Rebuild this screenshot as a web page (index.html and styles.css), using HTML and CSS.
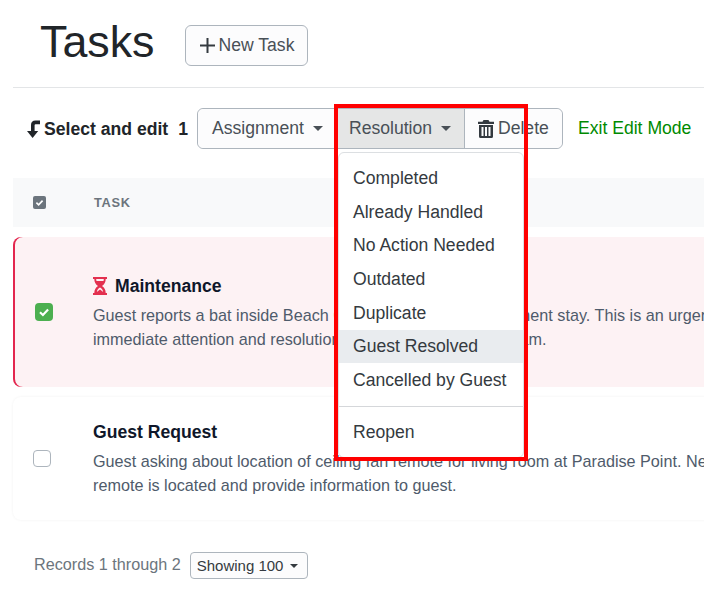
FILE: index.html
```html
<!DOCTYPE html>
<html lang="en">
<head>
<meta charset="utf-8">
<title>Tasks</title>
<link rel="stylesheet" href="styles.css">
</head>
<body>
<main class="page">
  <header class="page-header">
    <h1 class="title">Tasks</h1>
    <button class="btn btn-new">
      <svg class="icon-plus" viewBox="0 0 15 15" width="15" height="15"><path d="M6.5 0h2v6.5H15v2H8.5V15h-2V8.5H0v-2h6.5z"/></svg>
      New Task
    </button>
  </header>

  <section class="toolbar">
    <svg class="icon-level" viewBox="0 0 13 18" width="13" height="18"><path d="M13 .5H8.5Q4 .5 4 5v6H0l5.6 7 5.6-7H7.6V5.2q0-1 1-1H13z"/></svg>
    <strong class="select-label">Select and edit</strong>
    <strong class="select-count">1</strong>
    <div class="btn-group">
      <button class="group-btn group-assign">Assignment<span class="caret"></span></button>
      <div class="group-item">
        <button class="group-btn group-res">Resolution<span class="caret"></span></button>
        <div class="menu">
          <a class="menu-item">Completed</a>
          <a class="menu-item">Already Handled</a>
          <a class="menu-item">No Action Needed</a>
          <a class="menu-item">Outdated</a>
          <a class="menu-item">Duplicate</a>
          <a class="menu-item menu-item-hover">Guest Resolved</a>
          <a class="menu-item">Cancelled by Guest</a>
          <div class="menu-divider"></div>
          <a class="menu-item">Reopen</a>
        </div>
        <div class="highlight"></div>
      </div>
      <button class="group-btn group-del">
        <svg class="icon-trash" viewBox="0 0 16 18" width="16" height="18"><path fill-rule="evenodd" d="M5.5 0h5l1 1.8H16V4H0V1.8h4.500zM1 5h14v11.500Q15 18 13.500 18h-11Q1 18 1 16.500zM3.500 7v9h2V7zM7 7v9h2V7zM10.500 7v9h2V7z"/></svg>
        Delete
      </button>
    </div>
    <a class="exit-link">Exit Edit Mode</a>
  </section>

  <div class="table-head">
    <span class="head-check">
      <svg viewBox="0 0 13 13" width="13" height="13"><rect width="13" height="13" rx="2" fill="#6c757d"/><path d="M3.4 6.7l2.2 2.1 4-4.2" fill="none" stroke="#fff" stroke-width="1.7"/></svg>
    </span>
    <span class="head-label">TASK</span>
  </div>

  <article class="row row-selected">
    <div class="row-check">
      <span class="check check-on">
        <svg viewBox="0 0 18 18" width="18" height="18"><path d="M5 9.3l2.900 2.700 5.200-5.400" fill="none" stroke="#fff" stroke-width="2.200"/></svg>
      </span>
    </div>
    <div class="row-body">
      <h2 class="row-title">
        <svg class="icon-hourglass" viewBox="0 0 14 18" width="14" height="18"><path fill-rule="evenodd" d="M0 0h14v2h-1.300c0 3-1.300 5.500-3.700 7 2.400 1.500 3.700 4 3.700 7H14v2H0v-2h1.300c0-3 1.300-5.500 3.700-7C2.600 7.500 1.300 5 1.300 2H0zM3.200 2c0 .8.100 1.400.3 2h7c.2-.6.300-1.200.3-2zM7 10.500c-1.700.9-2.800 2.500-3.200 4.500L7 12.500l3.200 2.500c-.4-2-1.500-3.600-3.200-4.500z"/></svg>
        Maintenance
      </h2>
      <p class="row-text">Guest reports a bat inside Beach Cottage during their apartment stay. This is an urgent issue that requires</p>
      <p class="row-text">immediate attention and resolution from the maintenance team.</p>
    </div>
  </article>

  <article class="row row-plain">
    <div class="row-check">
      <span class="check check-off"></span>
    </div>
    <div class="row-body">
      <h2 class="row-title">Guest Request</h2>
      <p class="row-text">Guest asking about location of ceiling fan remote for living room at Paradise Point. Need to confirm where</p>
      <p class="row-text">remote is located and provide information to guest.</p>
    </div>
  </article>

  <footer class="pager">
    <span class="pager-text">Records 1 through 2</span>
    <button class="pager-select">Showing 100<span class="caret caret-small"></span></button>
  </footer>
</main>
</body>
</html>
```

FILE: styles.css
```css
html, body {
  margin: 0;
  padding: 0;
  height: 591px;
  overflow: hidden;
  background: #fff;
}

body {
  font-family: "Liberation Sans", Arial, sans-serif;
  font-size: 16px;
  color: #212529;
}

.page {
  width: 1100px;
  margin-left: 13px;
}

.page-header {
  display: flex;
  align-items: center;
  gap: 30px;
  height: 88px;
  padding-left: 27px;
  padding-bottom: 4px;
  box-sizing: border-box;
  border-bottom: 1px solid #e3e5e7;
  margin-bottom: 20px;
}

.title {
  margin: 0;
  font-size: 44.8px;
  font-weight: 400;
  line-height: 1;
  color: #212529;
}

.btn {
  font: inherit;
}

.btn-new {
  display: flex;
  align-items: center;
  gap: 4px;
  height: 41px;
  width: 123px;
  margin-top: 8px;
  padding: 0 0 0 14px;
  font-size: 17.6px;
  background: #fcfcfd;
  color: #495057;
  border: 1px solid #adb5bd;
  border-radius: 6px;
}

.icon-plus {
  fill: #343a40;
  flex: none;
}

.toolbar {
  display: flex;
  align-items: center;
  height: 41px;
  padding-left: 14px;
  margin-bottom: 29px;
}

.icon-level {
  fill: #212529;
  flex: none;
  margin-right: 4px;
}

.select-label {
  font-size: 17.6px;
  color: #212529;
  margin-top: 2px;
}

.select-count {
  font-size: 17.6px;
  margin-top: 2px;
  margin-left: 10px;
  margin-right: 9px;
}

.btn-group {
  display: flex;
  height: 41px;
  border: 1px solid #adb5bd;
  border-radius: 6px;
  box-sizing: border-box;
}

.group-item {
  position: relative;
  display: flex;
}

.group-btn {
  font: inherit;
  font-size: 17.6px;
  color: #495057;
  border: 0;
  padding: 0;
  display: flex;
  align-items: center;
  background: #fcfcfd;
}

.group-assign {
  width: 139px;
  padding-left: 14px;
  border-radius: 6px 0 0 6px;
}

.group-res {
  width: 128px;
  padding-left: 12px;
  background: #e5e6e6;
  border-right: 1px solid #adb5bd;
}

.group-del {
  width: 97px;
  padding-left: 13px;
  gap: 4px;
  border-radius: 0 6px 6px 0;
}

.icon-trash {
  fill: #343a40;
  flex: none;
}

.caret {
  display: inline-block;
  margin-left: 9px;
  border-top: 5px solid currentColor;
  border-left: 5.5px solid transparent;
  border-right: 5.5px solid transparent;
}

.exit-link {
  margin-left: 15px;
  font-size: 17.6px;
  color: #008a00;
}

.menu {
  position: absolute;
  left: 1px;
  top: 43px;
  width: 186px;
  height: 306px;
  box-sizing: border-box;
  padding-top: 8.4px;
  background: #fff;
  border-radius: 6px;
  border: 1px solid #dcdfe2;
  z-index: 2;
}

.menu-item {
  display: block;
  font-size: 17.6px;
  line-height: 26.4px;
  padding: 3.64px 0 3.64px 14px;
  color: #343a40;
}

.menu-item-hover {
  background: #e9ecef;
}

.menu-divider {
  border-top: 1px solid #d5d7da;
  margin: 9px 0 8.6px;
}

.highlight {
  position: absolute;
  left: -3px;
  top: -5px;
  width: 194px;
  height: 357px;
  box-sizing: border-box;
  border: 4px solid #ff0000;
  z-index: 3;
}

.table-head {
  display: flex;
  align-items: center;
  height: 49px;
  background: #f8f9fa;
  margin-bottom: 10px;
}

.head-check {
  width: 81px;
  padding-left: 20px;
  box-sizing: border-box;
  display: flex;
}

.head-label {
  font-size: 12.8px;
  font-weight: 700;
  letter-spacing: .7px;
  color: #6c757d;
}

.row {
  display: flex;
  align-items: center;
  border-radius: 8px;
}

.row-selected {
  height: 150px;
  background: #fdf2f4;
  box-shadow: inset 2px 0 0 #e3264e;
  margin-bottom: 10px;
}

.row-plain {
  height: 123px;
  background: #fff;
  box-shadow: 0 0 3px rgba(0, 0, 0, .06);
  margin-bottom: 32px;
}

.row-check {
  width: 80px;
  flex: none;
  padding-left: 20px;
  box-sizing: border-box;
  display: flex;
}

.row-selected .row-check {
  padding-left: 22px;
}

.check {
  display: block;
  width: 18px;
  height: 18px;
  box-sizing: border-box;
  border-radius: 4px;
}

.check-on {
  background: #4caf50;
}

.check-off {
  background: #fff;
  border: 1px solid #adb5bd;
  height: 17px;
}

.row-title {
  display: flex;
  align-items: center;
  gap: 8px;
  margin: 0 0 5px;
  font-size: 17.6px;
  line-height: 24px;
  font-weight: 700;
  color: #0f172a;
}

.icon-hourglass {
  fill: #e3304f;
  flex: none;
}

.row-text {
  margin: 0;
  font-size: 16.2px;
  line-height: 24px;
  color: #4f5b6b;
  white-space: nowrap;
}

.pager {
  display: flex;
  align-items: center;
  padding-left: 21px;
  gap: 9px;
  height: 27px;
}

.pager-text {
  font-size: 16.2px;
  color: #6c757d;
  margin-bottom: 2px;
}

.pager-select {
  font: inherit;
  font-size: 15px;
  display: flex;
  align-items: center;
  width: 118px;
  height: 27px;
  padding: 0 0 0 6px;
  background: #fcfcfd;
  color: #343a40;
  border: 1px solid #adb5bd;
  border-radius: 4px;
}

.caret-small {
  margin-left: 7px;
  border-top-width: 4px;
  border-left-width: 4px;
  border-right-width: 4px;
}
```
